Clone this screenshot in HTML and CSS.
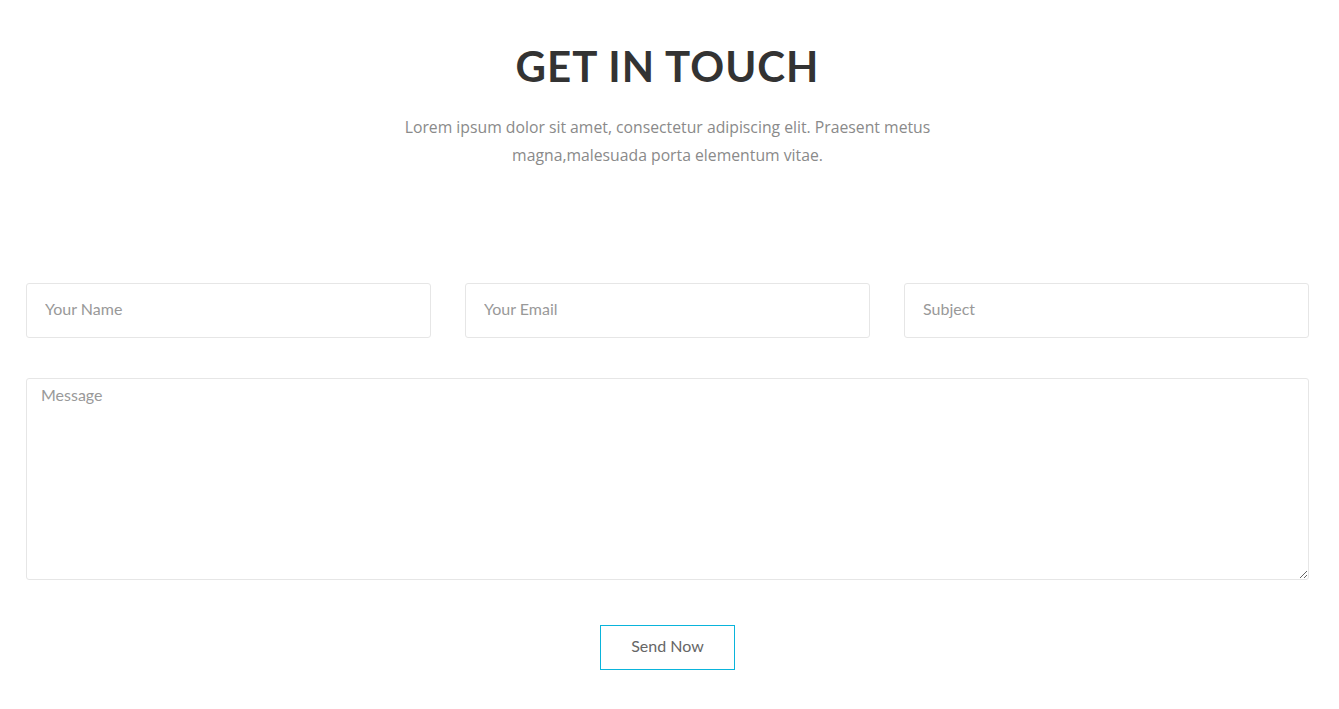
FILE: index.html
```html
<!DOCTYPE html>
<html>
<head>
<meta charset="utf-8">
<link rel="stylesheet" href="styles.css">
</head>
<body>
<section class="contact">
  <div class="head">
    <h2 class="title">GET IN TOUCH</h2>
    <p class="lead">Lorem ipsum dolor sit amet, consectetur adipiscing elit. Praesent metus magna,malesuada porta elementum vitae.</p>
  </div>
  <form class="form">
    <div class="row">
      <input class="field" type="text" placeholder="Your Name">
      <input class="field" type="text" placeholder="Your Email">
      <input class="field" type="text" placeholder="Subject">
    </div>
    <textarea class="message" placeholder="Message"></textarea>
    <div class="actions">
      <button class="send" type="button">Send Now</button>
    </div>
  </form>
</section>
</body>
</html>
```
FILE: styles.css
```css
html, body { margin: 0; padding: 0; background: #fff; }
body { font-family: "Open Sans", sans-serif; }
.contact { width: 1283px; margin-left: 26px; padding-top: 41px; }
.head { display: flex; flex-direction: column; align-items: center; }
.title {
  margin: 0;
  font-family: "Lato", sans-serif;
  font-weight: 700;
  font-size: 42px;
  line-height: 50px;
  letter-spacing: 1px;
  color: #333;
}
.lead {
  margin: 22px 0 0;
  width: 540px;
  text-align: center;
  font-size: 15.75px;
  line-height: 28px;
  color: #8a8a8a;
}
.form { margin-top: 114px; display: flex; flex-direction: column; }
.row { display: grid; grid-template-columns: repeat(3, 1fr); gap: 34px; }
.field, .message {
  box-sizing: border-box;
  border: 1px solid #e6e6e6;
  border-radius: 3px;
  font-family: "Lato", sans-serif;
  font-size: 16px;
  color: #555;
  background: #fff;
  outline: none;
}
.field { height: 55px; padding: 0 18px 4px; width: 100%; }
.message { margin-top: 40px; height: 202px; padding: 6px 14px; resize: vertical; }
.field::placeholder, .message::placeholder { color: #999; }
.actions { display: flex; justify-content: center; margin-top: 45px; }
.send {
  width: 135px; height: 45px;
  padding: 0 0 4px;
  border: 1px solid #0ab4db;
  background: #fff;
  font-family: "Lato", sans-serif;
  font-size: 16px;
  color: #666;
}
```
